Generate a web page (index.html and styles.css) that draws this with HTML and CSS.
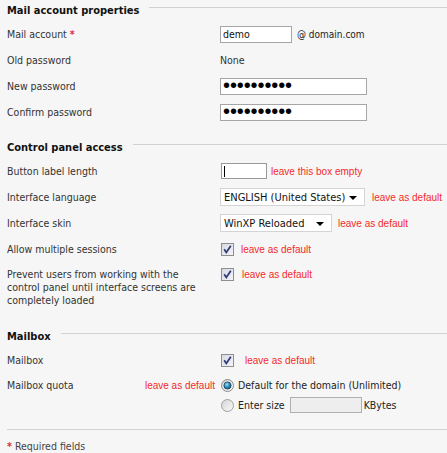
FILE: index.html
```html
<!DOCTYPE html>
<html>
<head>
<meta charset="utf-8">
<link rel="stylesheet" href="styles.css">
</head>
<body>
<div class="page">
  <div class="sec-head"><h2>Mail account properties</h2><span class="rule"></span></div>
  <div class="row"><div class="lbl">Mail account <span class="req">*</span></div><div class="ctl"><div class="box box-demo">demo</div><span class="after">@ domain.com</span></div></div>
  <div class="row"><div class="lbl">Old password</div><div class="ctl"><span class="val">None</span></div></div>
  <div class="row"><div class="lbl">New password</div><div class="ctl"><div class="box box-pass"><span class="dots">••••••••••</span></div></div></div>
  <div class="row"><div class="lbl">Confirm password</div><div class="ctl"><div class="box box-pass"><span class="dots">••••••••••</span></div></div></div>

  <div class="sec-head sec-2"><h2>Control panel access</h2><span class="rule"></span></div>
  <div class="row"><div class="lbl">Button label length</div><div class="ctl"><div class="box box-short"><span class="caret"></span></div><span class="note note-a">leave this box empty</span></div></div>
  <div class="row"><div class="lbl">Interface language</div><div class="ctl"><div class="select sel-lang"><span>ENGLISH (United States)</span><span class="arrow"></span></div><span class="note note-b">leave as default</span></div></div>
  <div class="row"><div class="lbl">Interface skin</div><div class="ctl"><div class="select sel-skin"><span>WinXP Reloaded</span><span class="arrow"></span></div><span class="note note-c">leave as default</span></div></div>
  <div class="row"><div class="lbl">Allow multiple sessions</div><div class="ctl"><svg class="chk" width="13" height="13" viewBox="0 0 13 13"><defs><linearGradient id="cg" x1="0" y1="0" x2="1" y2="1"><stop offset="0" stop-color="#d8d8e2"/><stop offset="1" stop-color="#f4f4f8"/></linearGradient></defs><rect x="0.5" y="0.5" width="12" height="12" fill="url(#cg)" stroke="#8e8e8e"/><path d="M3.2 6.3 L5.3 9.4 L9.8 2.8" stroke="#2d3c78" stroke-width="1.8" fill="none"/></svg><span class="note note-d">leave as default</span></div></div>
  <div class="row row-tall"><div class="lbl lbl-wrap">Prevent users from working with the control panel until interface screens are completely loaded</div><div class="ctl ctl-top"><svg class="chk" width="13" height="13" viewBox="0 0 13 13"><rect x="0.5" y="0.5" width="12" height="12" fill="url(#cg)" stroke="#8e8e8e"/><path d="M3.2 6.3 L5.3 9.4 L9.8 2.8" stroke="#2d3c78" stroke-width="1.8" fill="none"/></svg><span class="note note-e">leave as default</span></div></div>

  <div class="sec-head sec-3"><h2>Mailbox</h2><span class="rule"></span></div>
  <div class="row"><div class="lbl">Mailbox</div><div class="ctl"><svg class="chk" width="13" height="13" viewBox="0 0 13 13"><rect x="0.5" y="0.5" width="12" height="12" fill="url(#cg)" stroke="#8e8e8e"/><path d="M3.2 6.3 L5.3 9.4 L9.8 2.8" stroke="#2d3c78" stroke-width="1.8" fill="none"/></svg><span class="note note-f">leave as default</span></div></div>
  <div class="quota">
    <div class="lbl lbl-quota"><span>Mailbox quota</span><span class="note">leave as default</span></div>
    <div class="radios">
      <div class="rline"><svg class="radio" width="13" height="13" viewBox="0 0 13 13"><defs><radialGradient id="rg" cx="0.4" cy="0.35" r="0.7"><stop offset="0" stop-color="#9fe0f5"/><stop offset="0.6" stop-color="#1e86b8"/><stop offset="1" stop-color="#14506e"/></radialGradient><linearGradient id="rb" x1="0" y1="0" x2="1" y2="1"><stop offset="0" stop-color="#d4d4d4"/><stop offset="1" stop-color="#fafafa"/></linearGradient></defs><circle cx="6.5" cy="6.5" r="6" fill="url(#rb)" stroke="#8a8a8a"/><circle cx="6.5" cy="6.5" r="3.6" fill="url(#rg)" stroke="#1d3f55" stroke-width="0.8"/></svg><span>Default for the domain (Unlimited)</span></div>
      <div class="rline"><svg class="radio" width="13" height="13" viewBox="0 0 13 13"><circle cx="6.5" cy="6.5" r="6" fill="url(#rb)" stroke="#a0a0a0"/></svg><span>Enter size</span><div class="box box-size"></div><span class="kb">KBytes</span></div>
    </div>
  </div>

  <div class="foot-rule"></div>
  <div class="foot"><span class="req">*</span> Required fields</div>
</div>
</body>
</html>
```
FILE: styles.css
```css
html, body {
  margin: 0;
  padding: 0;
  background: #f6f6f6;
}
body {
  font-family: "DejaVu Sans Condensed", "DejaVu Sans", sans-serif;
  font-stretch: condensed;
  font-size: 10.5px;
  color: #333;
  overflow: hidden;
}
.page {
  padding: 1px 0 0 7px;
  width: 460px;
}
.sec-head {
  display: flex;
  align-items: center;
  height: 20px;
}
.sec-head h2 {
  margin: 0;
  font-size: 11px;
  font-weight: bold;
  color: #111;
  line-height: 20px;
  white-space: nowrap;
}
.sec-head .rule {
  flex: 1;
  height: 1px;
  background: #d2d2d2;
  margin-left: 10px;
  margin-bottom: 7px;
}
.sec-2 { margin-top: 13px; }
.sec-3 { margin-top: 20px; }
.row {
  display: grid;
  grid-template-columns: 213px 1fr;
  height: 26px;
  align-items: center;
}
.row-tall {
  height: auto;
  align-items: start;
  padding-top: 6px;
}
.lbl-wrap {
  line-height: 13px;
  width: 195px;
}
.ctl {
  display: flex;
  align-items: center;
}
.req {
  color: #e0303a;
  font-weight: bold;
}
.box {
  box-sizing: border-box;
  background: #fff;
  border: 1px solid #a6a6a6;
  height: 17px;
  display: flex;
  align-items: center;
  padding-left: 2px;
  color: #111;
}
.box-demo { width: 72px; }
.after { margin-left: 5px; color: #222; font-size: 10px; }
.val { color: #333; }
.box-pass { width: 147px; }
.dots {
  font-family: "Liberation Sans", Arial, sans-serif;
  font-size: 20px;
  line-height: 17px;
  height: 17px;
  color: #000;
  margin-top: -1px;
  letter-spacing: -0.1px;
}
.box-short {
  width: 46px;
  height: 16px;
  margin-left: 1px;
  border-color: #9a9a9a;
}
.caret {
  display: block;
  width: 1px;
  height: 11px;
  background: #000;
}
.note {
  font-family: "Liberation Sans", Arial, sans-serif;
  color: #f42a2a;
  font-size: 10px;
  white-space: nowrap;
}
.note-a { margin-left: 4px; }
.select {
  box-sizing: border-box;
  height: 18px;
  background: #fff;
  border: 1px solid #d4d4d4;
  display: flex;
  align-items: center;
  justify-content: space-between;
  padding: 0 7px 0 3px;
  color: #111;
  font-size: 11px;
}
.sel-lang { width: 145px; }
.sel-skin { width: 112px; }
.arrow {
  width: 0;
  height: 0;
  border-left: 4px solid transparent;
  border-right: 4px solid transparent;
  border-top: 4px solid #000;
  margin-top: 1px;
}
.note-b { margin-left: 7px; }
.note-c { margin-left: 6px; }
.chk { margin-left: 1px; display: block; }
.note-d { margin-left: 7px; }
.note-e { margin-left: 8px; }
.note-f { margin-left: 11px; }
.quota {
  display: grid;
  grid-template-columns: 213px 1fr;
  padding-top: 2px;
}
.lbl-quota {
  display: flex;
  justify-content: space-between;
  align-items: center;
  height: 20px;
  padding-right: 5px;
}
.rline {
  display: flex;
  align-items: center;
  height: 20px;
  color: #222;
}
.radio { margin-left: 1px; margin-right: 4px; display: block; }
.box-size {
  width: 72px;
  height: 16px;
  margin-left: 5px;
  background: #eeeeee;
  border-color: #b0b0b0;
}
.kb { margin-left: 2px; }
.foot-rule {
  height: 1px;
  background: #d2d2d2;
  margin-top: 14px;
}
.foot {
  margin-top: 8px;
  line-height: 16px;
  color: #444;
}
```
